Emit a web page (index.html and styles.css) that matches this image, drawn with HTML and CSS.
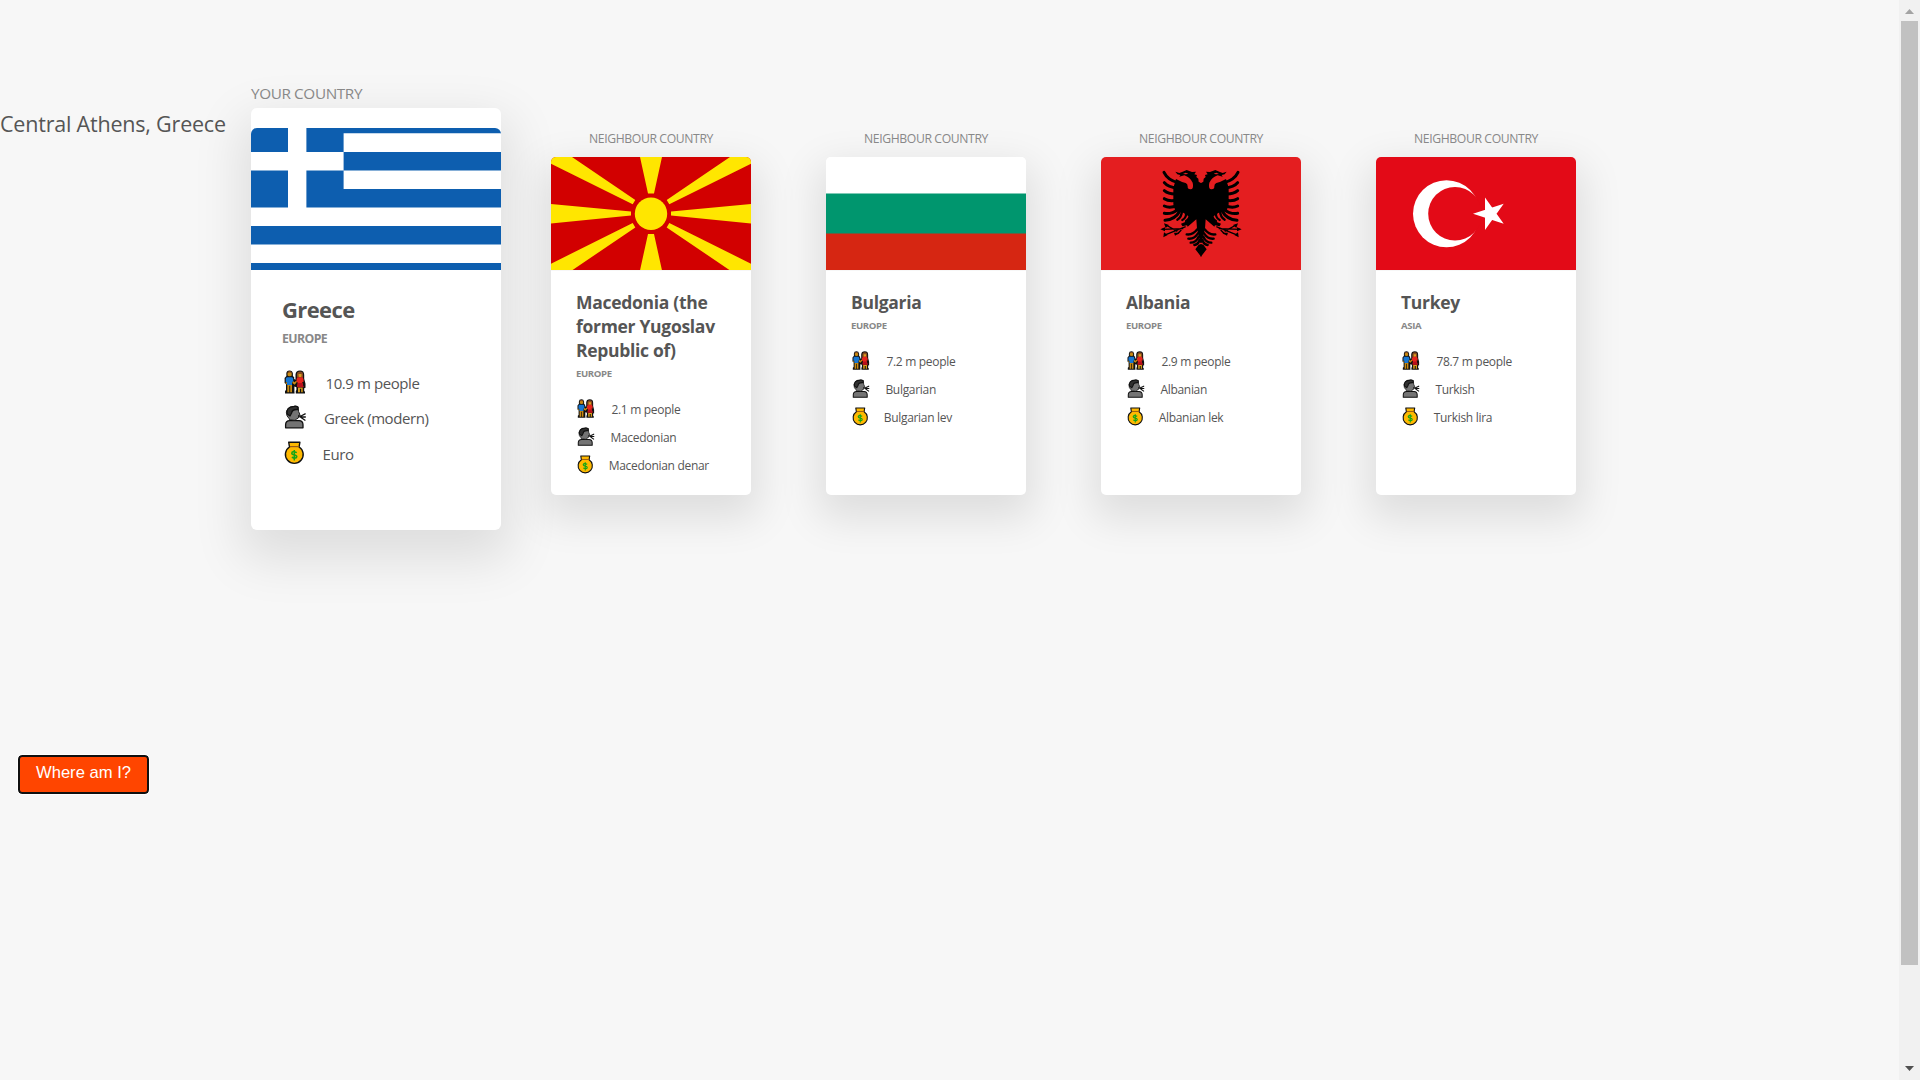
FILE: index.html
```
<!DOCTYPE html>
<html lang="en">
<head>
<meta charset="utf-8">
<title>Where am I?</title>
<link rel="stylesheet" href="styles.css">
</head>
<body>
<svg class="sprite" aria-hidden="true">
  <symbol id="people" viewBox="0 0 22 24">
    <path fill="#111" d="M2.300 3.500Q2.500.4 5.500.4t3.400 3.100v2.600l1.300 1.200V9l1.300.8V4.500Q11.800.4 16 .4t4.200 4.300v4l1.300 5v4l-1.300.5v3l.8.400v2H11.800v-2.600l.6-1v-2.800l-2-.6v5l.2 2H1v-2.600l1-1v-6L.6 13V8l1.800-2z"/>
    <path fill="#c98a12" d="M3.500 3.500q0-2 2.100-2t2.100 2v1.800q0 1-2 1t-2.200-1zM3.300 14.500h4.700v7.800H6.200v-6.500h-.9v6.500h-2zM1.700 12.200h1.200v2H1.700zM9 11l1.500 1.200 1.700-1.500.8 1.100-2.300 3L8.300 13z"/>
    <path fill="#1676d2" d="M2.800 7.300h5.400l1 1.300v3l-1.200.5v3H3v-3H1.800V8.500z"/>
    <path fill="#8a4a20" d="M3.500 3.200q0-2 2.100-2t2.100 2l-2-.8zM12.900 7.500V4.400q0-2.900 3.100-2.900T19 4.400v3.400z"/>
    <path fill="#dda01c" d="M14.600 4h2.900v2.500q-1.400 1.300-2.900 0zM14 17.500h4.700v4.800h-1.500v-3.600h-1.300v3.600H14z"/>
    <path fill="#e6251d" d="M13.500 7.300h5l1 1.700v3h-1.300l1.300 5h-6.300l.5-4.600-1.200-.6V9z"/>
    <path fill="#b8101c" d="M14 13h4.200l1.400 4.200h-6.200z"/>
  </symbol>
  <symbol id="speak" viewBox="0 0 22 24">
    <g stroke="#111" stroke-width="1.300" stroke-linejoin="round">
      <path fill="#747474" d="M1.600 22.800v-3q0-4.200 4.200-4.200H15q4 0 4 4.200v3z"/>
      <path fill="#747474" stroke-width=".9" d="M5 13.400q-2.600-2-2.600-6Q3.400 2 9 1.600q2-.9 5 .4l.6 4.600 1.400 3-1.200.4q.2 4-2.400 4.200l-1.400 1.200-5.400-.6z"/>
      <path fill="#303030" d="M3.200 9q-1.600-7 6.800-7.600 2-.6 4 .6v2.600q-5.800-.6-6.400 3.400l-1.600 3z"/>
      <path fill="none" stroke-width="1.300" d="M14.500 11h2.500l4.600-2.300M15.500 12h6.300M17 12.500l4.400 3"/>
    </g>
  </symbol>
  <symbol id="money" viewBox="0 0 22 24">
    <path fill="#ffb900" stroke="#111" stroke-width="1.400" stroke-linejoin="round" d="M4.700 1.200h11.200l-.8 4.800a8.900 8.900 0 1 1-9.600 0z"/>
    <path fill="none" stroke="#9a5b15" stroke-width="1.200" d="M6 5.600h8.600"/>
    <path fill="none" stroke="#16a516" stroke-width="1.500" d="M12.800 11.600q-4.800-1.800-5 .6 0 1.300 2.500 1.700t2.500 1.800q-.3 2.500-5 .6M10.300 9v10.500"/>
  </symbol>
</svg>

<main class="page">
  <section class="countries">
    <p class="location">Central Athens, Greece</p>

    <div class="country country--home">
      <h2 class="country__label">YOUR COUNTRY</h2>
      <article class="card">
        <svg class="card__flag" viewBox="0 0 250 142">
          <path fill="#0d5eaf" d="M0 0h250v142H0z"/>
          <path fill="#fff" d="M92.600 5.300H250V24H92.600zM92.600 42.600H250v18.400H92.600zM0 79.600h250v18.500H0zM0 116.600h250v18.500H0zM37 0h18.400v79.600H37zM0 24h92.600v18.500H0z"/>
        </svg>
        <div class="card__data">
          <h3 class="card__name">Greece</h3>
          <h4 class="card__region">EUROPE</h4>
          <p class="card__row card__row--people"><svg class="icon"><use href="#people"/></svg>10.9 m people</p>
          <p class="card__row card__row--speak"><svg class="icon"><use href="#speak"/></svg>Greek (modern)</p>
          <p class="card__row card__row--money"><svg class="icon"><use href="#money"/></svg>Euro</p>
        </div>
      </article>
    </div>

    <div class="country">
      <h2 class="country__label">NEIGHBOUR COUNTRY</h2>
      <article class="card">
        <svg class="card__flag" viewBox="0 0 200 113">
          <path fill="#d20000" d="M0 0h200v113H0z"/>
          <g fill="#ffe600">
            <circle cx="100" cy="56.700" r="16.200"/>
            <path d="M89 0h22l-8 36.500h-6zM89 113.400h22l-8-36.500h-6zM0 47v19.500l80-8v-4zM200 47v19.500l-80-8v-4z"/>
            <path d="M0 0h21l63.300 43-2.600 4.300L0 6.700zM200 0h-21l-63.300 43 2.600 4.300L200 6.700zM0 113.400h21l63.300-43-2.600-4.300L0 106.700zM200 113.400h-21l-63.300-43 2.600-4.300 81.700 40.600z"/>
          </g>
        </svg>
        <div class="card__data">
          <h3 class="card__name">Macedonia (the former Yugoslav Republic of)</h3>
          <h4 class="card__region">EUROPE</h4>
          <p class="card__row card__row--people"><svg class="icon"><use href="#people"/></svg>2.1 m people</p>
          <p class="card__row card__row--speak"><svg class="icon"><use href="#speak"/></svg>Macedonian</p>
          <p class="card__row card__row--money"><svg class="icon"><use href="#money"/></svg>Macedonian denar</p>
        </div>
      </article>
    </div>

    <div class="country">
      <h2 class="country__label">NEIGHBOUR COUNTRY</h2>
      <article class="card">
        <svg class="card__flag" viewBox="0 0 200 113">
          <path fill="#fff" d="M0 0h200v37H0z"/>
          <path fill="#00966e" d="M0 36.600h200V77H0z"/>
          <path fill="#d62612" d="M0 76.600h200V113H0z"/>
        </svg>
        <div class="card__data">
          <h3 class="card__name">Bulgaria</h3>
          <h4 class="card__region">EUROPE</h4>
          <p class="card__row card__row--people"><svg class="icon"><use href="#people"/></svg>7.2 m people</p>
          <p class="card__row card__row--speak"><svg class="icon"><use href="#speak"/></svg>Bulgarian</p>
          <p class="card__row card__row--money"><svg class="icon"><use href="#money"/></svg>Bulgarian lev</p>
        </div>
      </article>
    </div>

    <div class="country">
      <h2 class="country__label">NEIGHBOUR COUNTRY</h2>
      <article class="card">
        <svg class="card__flag" viewBox="33 111 600 339">
          <path fill="#e41e20" d="M33 111h600v339H33z"/>
          <defs>
            <g id="eagle">
              <path d="M334 190l-8-5-1-9-6-5 2-6-8-2 5-8-12 1-16-6-12 5-10 4-12-4 6 8 9 2-3 5 15-4q17 6 25 22 4 17-5 20-11 1-10-9 0-7-6-10-13-3-29-12l-8 26v50l6 20q24 0 42 18l-7 13-18 7 4 8 14-3 2 4 26-22 2 28 10 42h4z"/>
              <g fill="none" stroke="#000" stroke-width="9" stroke-linecap="round">
                <path d="M264 188Q233 180 222 157M262 204Q234 202 223 188M262 222Q237 224 223 212M262 240Q238 246 223 236M262 256Q240 266 223 258M264 268Q244 284 223 280M270 272Q256 298 225 301"/>
                <path stroke-width="7" d="M276 272Q275 292 262 299M288 276Q290 294 277 300M300 284Q299 298 288 303"/>
                <path stroke-width="7" d="M322 328Q308 346 290 343M324 340Q312 358 295 356M326 350Q318 368 302 368M329 360Q324 374 313 375"/>
              </g>
              <path fill="none" stroke="#000" stroke-width="4" d="M287 320L222 346M280 326L216 328M262 334L228 315M274 330L262 342"/>
              <path d="M211 328l14-6v12zM222 310l15 5-10 9zM220 352l2-15 11 8zM270 338l-15 9-3-9zM334 372l-8 2-10 14 18 23z"/>
              <path fill="#e41e20" d="M318 302q-2 20-17 28 2-18 17-28zM279 162l8-4 8 3-7 2z"/>
            </g>
          </defs>
          <use href="#eagle"/>
          <use href="#eagle" transform="translate(666 0) scale(-1 1)"/>
        </svg>
        <div class="card__data">
          <h3 class="card__name">Albania</h3>
          <h4 class="card__region">EUROPE</h4>
          <p class="card__row card__row--people"><svg class="icon"><use href="#people"/></svg>2.9 m people</p>
          <p class="card__row card__row--speak"><svg class="icon"><use href="#speak"/></svg>Albanian</p>
          <p class="card__row card__row--money"><svg class="icon"><use href="#money"/></svg>Albanian lek</p>
        </div>
      </article>
    </div>

    <div class="country">
      <h2 class="country__label">NEIGHBOUR COUNTRY</h2>
      <article class="card">
        <svg class="card__flag" viewBox="0 0 200 113">
          <path fill="#e30a17" d="M0 0h200v113H0z"/>
          <circle cx="70.500" cy="56.700" r="33.500" fill="#fff"/>
          <circle cx="79" cy="56.700" r="26.800" fill="#e30a17"/>
          <path fill="#fff" d="M97 56.700l30.700-10L109 73V40.400l18.700 26.300z"/>
        </svg>
        <div class="card__data">
          <h3 class="card__name">Turkey</h3>
          <h4 class="card__region">ASIA</h4>
          <p class="card__row card__row--people"><svg class="icon"><use href="#people"/></svg>78.7 m people</p>
          <p class="card__row card__row--speak"><svg class="icon"><use href="#speak"/></svg>Turkish</p>
          <p class="card__row card__row--money"><svg class="icon"><use href="#money"/></svg>Turkish lira</p>
        </div>
      </article>
    </div>
  </section>
  <button class="button" type="button">Where am I?</button>
</main>

<aside class="scrollbar" aria-hidden="true">
  <svg class="scrollbar__arrow" viewBox="0 0 21 21"><path fill="#a3a3a3" d="M6 14l4.500-5 4.500 5z"/></svg>
  <div class="scrollbar__thumb"></div>
  <svg class="scrollbar__arrow scrollbar__arrow--down" viewBox="0 0 21 21"><path fill="#505050" d="M6 7l4.500 5L15 7z"/></svg>
</aside>
</body>
</html>
```
FILE: styles.css
```
* { box-sizing: border-box; margin: 0; padding: 0; }

body {
  display: flex;
  height: 1080px;
  overflow: hidden;
  background: #f7f7f7;
  color: #555;
  font-family: "Open Sans", "Noto Sans", sans-serif;
}

.sprite { position: absolute; width: 0; height: 0; }

.page { flex: 1; min-width: 0; padding-top: 82px; }

.countries {
  display: flex;
  align-items: flex-start;
  height: 673px;
}

.location {
  width: 251px;
  padding-top: 27px;
  font-size: 21.5px;
  letter-spacing: -.2px;
  line-height: 30px;
  white-space: nowrap;
}

.country { width: 200px; margin-right: 75px; padding-top: 48px; }

.country__label {
  margin-bottom: 9px;
  color: #888;
  font-size: 12.2px;
  font-weight: 500;
  letter-spacing: -.37px;
  line-height: 18px;
  text-align: center;
  white-space: nowrap;
}

.card {
  height: 337.5px;
  border-radius: 5px;
  overflow: hidden;
  background: #fff;
  box-shadow: 0 16px 40px 8px rgba(0, 0, 0, .1);
}

.card__flag { display: block; width: 200px; height: 113px; }

.card__data { padding: 20px 0 0 25px; }
.country:not(.country--home) .card__data { padding-top: 19px; border-top: 1px solid #f7f7f7; }

.card__name { width: 160px; font-size: 17.5px; font-weight: 700; letter-spacing: -.3px; line-height: 24px; }

.card__region {
  margin: 5px 0 14.5px;
  color: #888;
  font-size: 9.6px;
  font-weight: 700;
  letter-spacing: -.38px;
  line-height: 14px;
}

.card__row {
  display: flex;
  align-items: center;
  height: 28px;
  font-size: 12px;
  letter-spacing: -.3px;
  white-space: nowrap;
}

.icon { width: 17.6px; height: 19.2px; margin: -2px 16.5px 0 1.3px; }
.card__row--speak .icon { margin-right: 15.5px; }
.card__row--money .icon { margin-right: 13.8px; }

.country--home { width: 250px; margin-right: 50px; padding-top: 0; }
.country--home .country__label {
  margin-bottom: 4px;
  font-size: 15.3px;
  letter-spacing: -.38px;
  line-height: 22px;
  text-align: left;
}
.country--home .card {
  height: 422px;
  padding-top: 20px;
  border-radius: 6px;
  box-shadow: 0 20px 50px 10px rgba(0, 0, 0, .1);
}
.country--home .card__flag { width: 250px; height: 142px; border-radius: 6px 6px 0 0; }
.country--home .card__data { padding: 23.5px 0 0 31px; }
.country--home .card__name { font-size: 22px; letter-spacing: -.6px; line-height: 30px; }
.country--home .card__region { margin: 6px 0 18px; font-size: 12.3px; letter-spacing: -.6px; line-height: 18px; }
.country--home .card__row { height: 35.3px; font-size: 15px; letter-spacing: -.42px; }
.country--home .card__row--speak { padding-bottom: 1px; }
.country--home .icon { width: 22px; height: 24px; margin: -2px 20px 0 1.5px; }
.country--home .card__row--speak .icon { margin-right: 18.5px; }
.country--home .card__row--money .icon { margin-right: 17px; }

.button {
  display: block;
  width: 131px;
  height: 39px;
  padding-bottom: 2px;
  border: 2px solid #101010;
  border-radius: 4px;
  outline: 1px solid #fff;
  margin-left: 18px;
  background: #ff4500;
  color: #fff;
  font: 16.6px/1 "Liberation Sans", Arial, sans-serif;
}

.scrollbar {
  display: flex;
  flex-direction: column;
  align-items: center;
  width: 21px;
  height: 1080px;
  background: #f1f1f1;
}
.scrollbar__arrow { width: 21px; height: 21px; }
.scrollbar__arrow--down { margin-top: auto; }
.scrollbar__thumb { width: 17px; height: 944px; background: #c1c1c1; }
```
